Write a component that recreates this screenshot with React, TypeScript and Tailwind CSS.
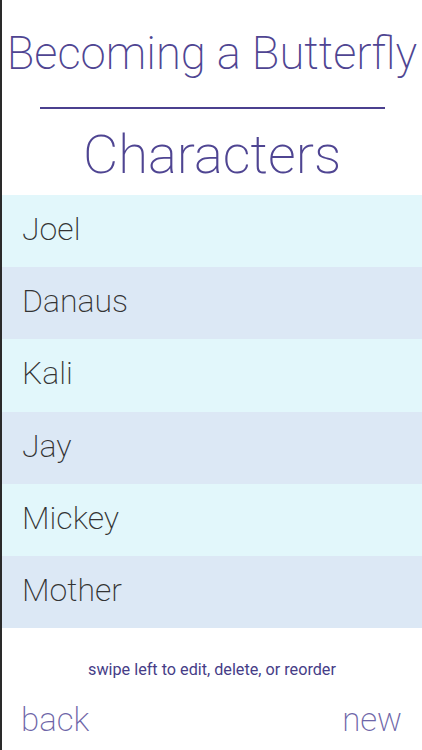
const characters = ["Joel", "Danaus", "Kali", "Jay", "Mickey", "Mother"];

export default function App() {
  return (
    <div
      className="w-[422px] h-[750px] bg-white border-l-2 border-[#2a2a2a] flex flex-col overflow-hidden"
      style={{ fontFamily: "Roboto, 'Liberation Sans', sans-serif" }}
    >
      <h1 className="pt-[26px] text-center text-[45.4px] leading-[56px] font-extralight text-[#4f4592] whitespace-nowrap">
        Becoming a Butterfly
      </h1>
      <div className="mx-auto mt-[25px] w-[345px] h-[2px] bg-[#4b408f]" />
      <h2 className="mt-[11px] text-center text-[54.4px] leading-[70px] font-extralight text-[#4f4592]">
        Characters
      </h2>
      <ul className="mt-[5px] flex flex-col">
        {characters.map((name, i) => (
          <li
            key={name}
            className={`h-[72.2px] flex items-center pl-[20px] pb-[4px] text-[32px] font-extralight text-[#333333] ${
              i % 2 === 0 ? "bg-[#e2f7fb]" : "bg-[#dce8f5]"
            }`}
          >
            {name}
          </li>
        ))}
      </ul>
      <p className="mt-[30px] text-center text-[16.2px] text-[#463d87]">
        swipe left to edit, delete, or reorder
      </p>
      <div className="mt-[18px] flex justify-between pl-[19px] pr-[20px] text-[33px] font-extralight text-[#6e66a8] leading-[40px]">
        <span>back</span>
        <span>new</span>
      </div>
    </div>
  );
}
